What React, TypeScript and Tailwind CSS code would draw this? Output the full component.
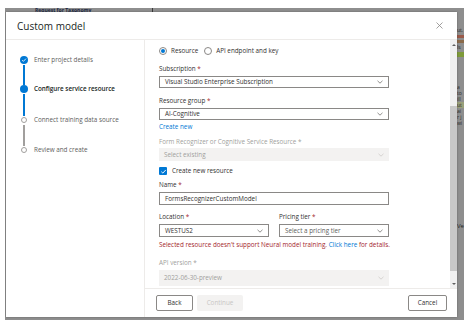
import React from 'react';

type Step = { label: string; state: 'done' | 'current' | 'todo' };

const steps: Step[] = [
  { label: 'Enter project details', state: 'done' },
  { label: 'Configure service resource', state: 'current' },
  { label: 'Connect training data source', state: 'todo' },
  { label: 'Review and create', state: 'todo' },
];

const Chevron = ({ color = '#605e5c' }: { color?: string }) => (
  <svg width="6" height="4" viewBox="0 0 6 4" fill="none">
    <path d="M0.5 0.8 L3 3.2 L5.5 0.8" stroke={color} strokeWidth="0.7" />
  </svg>
);

const Check = ({ size = 6 }: { size?: number }) => (
  <svg width={size} height={size} viewBox="0 0 8 8" fill="none">
    <path d="M1.5 4.2 L3.2 5.8 L6.6 2.2" stroke="#fff" strokeWidth="1.1" />
  </svg>
);

const Label = ({ text, disabled }: { text: string; disabled?: boolean }) => (
  <div className={`h-[10px] leading-[10px] font-medium ${disabled ? 'text-[#a19f9d]' : 'text-[#323130]'}`}>
    {text} <span className={disabled ? 'text-[#a19f9d]' : 'text-[#a4262c]'}>*</span>
  </div>
);

const Select = ({
  value,
  disabled,
  placeholder,
  className = '',
}: {
  value: string;
  disabled?: boolean;
  placeholder?: boolean;
  className?: string;
}) => (
  <div
    className={`flex items-center justify-between px-[5px] ${
      disabled ? 'bg-[#f3f2f1] text-[#a19f9d]' : 'bg-white border border-[#8a8886]'
    } ${placeholder ? 'text-[#605e5c]' : disabled ? '' : 'text-[#323130]'} ${className}`}
  >
    <span>{value}</span>
    <Chevron color={disabled ? '#c8c6c4' : '#605e5c'} />
  </div>
);

const StepNav = () => (
  <div className="w-[139px] shrink-0 border-r border-[#edebe9] pt-[16px] pl-[14px]">
    {steps.map((s, i) => (
      <div key={s.label}>
        <div className="flex items-center h-[8px]">
          <div className="w-[8px] flex justify-center">
            {s.state === 'done' && (
              <div className="w-[8px] h-[8px] rounded-full bg-[#0078d4] flex items-center justify-center">
                <Check size={6} />
              </div>
            )}
            {s.state === 'current' && <div className="w-[8px] h-[8px] rounded-full bg-[#0078d4]" />}
            {s.state === 'todo' && <div className="w-[6px] h-[6px] rounded-full border border-[#a19f9d] bg-white" />}
          </div>
          <span
            className={`ml-[6px] leading-[8px] ${
              s.state === 'current' ? 'font-semibold text-[#201f1e]' : 'text-[#605e5c]'
            }`}
          >
            {s.label}
          </span>
        </div>
        {i < steps.length - 1 && (
          <div className="w-[8px] flex justify-center">
            <div
              className={`w-[1.5px] ${i === 0 ? 'h-[20px]' : i === 1 ? 'h-[22px]' : 'h-[21px]'} ${
                i < 2 ? 'bg-[#0078d4]' : 'bg-[#a19f9d]'
              } my-[0.5px]`}
            />
          </div>
        )}
      </div>
    ))}
  </div>
);

const Scrollbar = () => (
  <div className="w-[7px] shrink-0 bg-[#f0f0f0] flex flex-col items-center">
    <div className="h-[9px] flex items-center justify-center">
      <div className="w-0 h-0 border-l-[2px] border-r-[2px] border-b-[2px] border-l-transparent border-r-transparent border-b-[#606060]" />
    </div>
    <div className="mt-[57px] w-full h-[165px] bg-[#c8c8c8]" />
    <div className="flex-1" />
    <div className="h-[9px] flex items-center justify-center">
      <div className="w-0 h-0 border-l-[2px] border-r-[2px] border-t-[2px] border-l-transparent border-r-transparent border-t-[#606060]" />
    </div>
  </div>
);

const FormBody = () => (
  <div className="flex-1 overflow-hidden pl-[14px] pt-[6px]">
    <div className="w-[230px]">
      {/* source type */}
      <div className="flex items-center h-[10px] text-[#323130]">
        <div className="w-[8px] h-[8px] rounded-full border border-[#8a8886] flex items-center justify-center">
          <div className="w-[4px] h-[4px] rounded-full bg-[#0078d4]" />
        </div>
        <span className="ml-[4px]">Resource</span>
        <div className="ml-[6px] w-[8px] h-[8px] rounded-full border border-[#8a8886]" />
        <span className="ml-[4px]">API endpoint and key</span>
      </div>

      <div className="mt-[8px]">
        <Label text="Subscription" />
        <Select className="mt-[2px] h-[12px]" value="Visual Studio Enterprise Subscription" />
      </div>

      <div className="mt-[8px]">
        <Label text="Resource group" />
        <Select className="mt-[2px] h-[12px]" value="AI-Cognitive" />
        <div className="mt-[2px] h-[10px] leading-[10px] text-[#0078d4]">Create new</div>
      </div>

      <div className="mt-[5px]">
        <Label text="Form Recognizer or Cognitive Service Resource" disabled />
        <Select className="mt-[1px] h-[13px]" value="Select existing" disabled />
      </div>

      <div className="mt-[5px] flex items-center h-[10px] text-[#323130]">
        <div className="w-[8px] h-[8px] rounded-[1px] bg-[#0078d4] flex items-center justify-center">
          <Check size={7} />
        </div>
        <span className="ml-[5px]">Create new resource</span>
      </div>

      <div className="mt-[4px]">
        <Label text="Name" />
        <div className="mt-[2px] h-[13px] border border-[#8a8886] px-[5px] flex items-center text-[#323130]">
          FormsRecognizerCustomModel
        </div>
      </div>

      <div className="mt-[7px] grid grid-cols-2 gap-x-[10px]">
        <div>
          <Label text="Location" />
          <Select className="mt-[2px] h-[13px]" value="WESTUS2" />
        </div>
        <div>
          <Label text="Pricing tier" />
          <Select className="mt-[2px] h-[13px]" value="Select a pricing tier" placeholder />
        </div>
      </div>

      <div className="mt-[3px] h-[10px] leading-[10px] whitespace-nowrap text-[#a4262c]">
        Selected resource doesn't support Neural model training.{' '}
        <span className="text-[#0078d4]">Click here</span> for details.
      </div>

      <div className="mt-[8px]">
        <Label text="API version" disabled />
        <Select className="mt-[2px] h-[16px]" value="2022-06-30-preview" disabled />
      </div>
    </div>
  </div>
);

const Footer = () => (
  <div className="h-[29px] shrink-0 border-t border-[#edebe9] flex items-start pt-[6px] pl-[11px] pr-[10px]">
    <button className="w-[37px] h-[16px] border border-[#8a8886] rounded-[2px] bg-white text-[#323130]">Back</button>
    <button className="ml-[4px] w-[46px] h-[16px] rounded-[2px] bg-[#f3f2f1] text-[#c8c6c4]">Continue</button>
    <div className="flex-1" />
    <button className="w-[39px] h-[16px] border border-[#8a8886] rounded-[2px] bg-white text-[#323130]">Cancel</button>
  </div>
);

const Backdrop = () => (
  <>
    <div className="absolute left-[30px] top-0 text-[5px] leading-[4px] font-bold text-[#1f2a44] whitespace-nowrap">
      Request for Taxonomy
    </div>
    <div className="absolute left-[147px] top-0 w-[1px] h-[4px] bg-[#3a3a3a]" />
    <div className="absolute left-[452px] top-[20px] w-[7px] flex flex-col gap-[2px] text-[5px] leading-[5px] text-[#222]">
      <span>ut.</span>
      <div className="h-[3px] bg-[#9a5a4a]" />
      <div className="h-[3px] bg-[#8a6a4a]" />
      <span>ls</span>
      <div className="h-[5px] bg-[#7e9a3a]" />
    </div>
    <div className="absolute left-[452px] top-[76px] w-[7px] flex flex-col text-[5px] leading-[6px] text-[#2a2a2a]">
      <span>a</span>
      <span>to</span>
      <span>ill</span>
      <span className="bg-[#9aa07a]">ut</span>
      <span>ai</span>
      <span>r j</span>
      <span>wi</span>
    </div>
    <div className="absolute left-[452px] top-[214px] text-[6px] text-[#222]">Ve</div>
  </>
);

export default function App() {
  return (
    <div
      className="w-[474px] h-[328px] bg-white overflow-hidden pt-[8px] pl-[5px] text-[6.3px]"
      style={{ fontFamily: '"Open Sans", "Noto Sans", sans-serif' }}
    >
      <div className="relative w-[459px] h-[312px] bg-[#8e8e8e] pl-[1px] pt-[4px] overflow-hidden">
        <Backdrop />
        <div className="relative w-[451px] h-[305px] bg-white flex flex-col shadow-[0_0_2px_rgba(0,0,0,0.3)]">
          <div className="h-[28px] shrink-0 border-b border-[#edebe9] flex items-center justify-between pl-[11px] pr-[14px]">
            <span className="text-[10px] font-medium text-[#201f1e] leading-none">Custom model</span>
            <svg width="7" height="7" viewBox="0 0 7 7">
              <path d="M0.5 0.5 L6.5 6.5 M6.5 0.5 L0.5 6.5" stroke="#8a8886" strokeWidth="0.8" />
            </svg>
          </div>
          <div className="flex flex-1 min-h-0">
            <StepNav />
            <div className="flex-1 flex flex-col min-w-0">
              <div className="flex flex-1 min-h-0">
                <FormBody />
                <Scrollbar />
              </div>
              <Footer />
            </div>
          </div>
        </div>
      </div>
    </div>
  );
}
